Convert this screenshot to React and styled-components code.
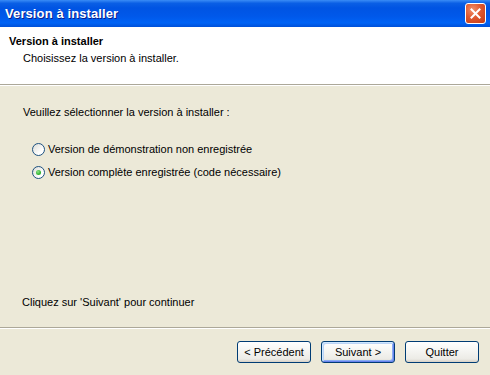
import React from 'react';
import styled, { createGlobalStyle } from 'styled-components';

const GlobalStyle = createGlobalStyle`
  body {
    margin: 0;
    background: #ece9d8;
  }
`;

// whole dialog window
const Window = styled.div`
  width: 490px;
  height: 375px;
  display: flex;
  flex-direction: column;
  background: #ece9d8;
  font-family: Tahoma, 'Liberation Sans', Arial, sans-serif;
  font-size: 11px;
  color: #000;
  overflow: hidden;
`;

const TitleBar = styled.div`
  height: 27px;
  flex: none;
  display: flex;
  align-items: center;
  justify-content: space-between;
  padding: 0 4px 0 5px;
  background: linear-gradient(
    to bottom,
    #3a8cf6 0%,
    #0a5fe5 12%,
    #0054e3 30%,
    #0058ea 60%,
    #0063f5 85%,
    #0050d8 100%
  );
`;

const TitleText = styled.span`
  font-family: 'Liberation Sans', Arial, sans-serif;
  font-weight: bold;
  font-size: 13px;
  color: #fff;
  text-shadow: 1px 1px 0 #0a1e8c;
  letter-spacing: 0.1px;
`;

const CloseButton = styled.div`
  width: 19px;
  height: 19px;
  border: 1px solid #fff;
  border-radius: 3px;
  background: radial-gradient(circle at 35% 30%, #f0906c 0%, #e0582f 45%, #c23a14 100%);
  display: flex;
  align-items: center;
  justify-content: center;
`;

const Header = styled.div`
  height: 58px;
  flex: none;
  background: #fff;
  border-bottom: 1px solid #aca899;
  box-shadow: 0 1px 0 #fff;
  padding: 8px 9px 0;
  box-sizing: border-box;
`;

const HeaderTitle = styled.div`
  font-weight: bold;
  font-size: 11px;
  line-height: 13px;
`;

const HeaderSub = styled.div`
  margin-top: 4px;
  padding-left: 14px;
  line-height: 13px;
`;

const Body = styled.div`
  flex: 1;
  display: flex;
  flex-direction: column;
  padding: 21px 22px 0 23px;
`;

const Prompt = styled.div`
  line-height: 13px;
`;

const RadioGroup = styled.div`
  margin-top: 24px;
  padding-left: 9px;
  display: flex;
  flex-direction: column;
  gap: 10px;
`;

const RadioRow = styled.label`
  display: flex;
  align-items: center;
  gap: 3px;
  line-height: 13px;
`;

const RadioCircle = styled.span`
  width: 11px;
  height: 11px;
  border-radius: 50%;
  border: 1px solid #1c5180;
  background: linear-gradient(135deg, #dcdcd5 0%, #fff 70%);
  display: flex;
  align-items: center;
  justify-content: center;
  flex: none;

  &::after {
    content: '';
    display: ${p => (p.checked ? 'block' : 'none')};
    width: 5px;
    height: 5px;
    border-radius: 50%;
    background: radial-gradient(circle at 40% 35%, #8fe38a 0%, #32b431 60%, #21a121 100%);
  }
`;

const Hint = styled.div`
  margin-top: auto;
  margin-bottom: 18px;
  margin-left: -1px;
  line-height: 13px;
`;

const Separator = styled.div`
  height: 1px;
  flex: none;
  background: #aca899;
  box-shadow: 0 1px 0 #fff;
`;

const Footer = styled.div`
  height: 47px;
  flex: none;
  display: flex;
  justify-content: flex-end;
  align-items: flex-start;
  gap: 10px;
  padding: 13px 11px 0 0;
  box-sizing: border-box;
`;

const Button = styled.button`
  width: 74px;
  height: 22px;
  padding: 0;
  font-family: Tahoma, 'Liberation Sans', Arial, sans-serif;
  font-size: 11px;
  color: #000;
  border: 1px solid #003c74;
  border-radius: 3px;
  background: linear-gradient(to bottom, #ffffff 0%, #f6f6f3 40%, #ecebe6 85%, #d6d0c5 100%);
  box-shadow: ${p =>
    p.primary
      ? 'inset 1px 1px 0 #cee7ff, inset -1px -1px 0 #6982ee, inset 2px 2px 0 #bcd4f6, inset -2px -2px 0 #89adf2'
      : 'none'};
`;

export default function App() {
  return (
    <Window>
      <GlobalStyle />
      <TitleBar>
        <TitleText>Version à installer</TitleText>
        <CloseButton>
          <svg width="11" height="11" viewBox="0 0 11 11">
            <path d="M1.5 1.5 L9.5 9.5 M9.5 1.5 L1.5 9.5" stroke="#fff" strokeWidth="2" strokeLinecap="square" />
          </svg>
        </CloseButton>
      </TitleBar>
      <Header>
        <HeaderTitle>Version à installer</HeaderTitle>
        <HeaderSub>Choisissez la version à installer.</HeaderSub>
      </Header>
      <Body>
        <Prompt>Veuillez sélectionner la version à installer :</Prompt>
        <RadioGroup>
          <RadioRow>
            <RadioCircle />
            Version de démonstration non enregistrée
          </RadioRow>
          <RadioRow>
            <RadioCircle checked />
            Version complète enregistrée (code nécessaire)
          </RadioRow>
        </RadioGroup>
        <Hint>Cliquez sur 'Suivant' pour continuer</Hint>
      </Body>
      <Separator />
      <Footer>
        <Button>&lt; Précédent</Button>
        <Button primary>Suivant &gt;</Button>
        <Button>Quitter</Button>
      </Footer>
    </Window>
  );
}
